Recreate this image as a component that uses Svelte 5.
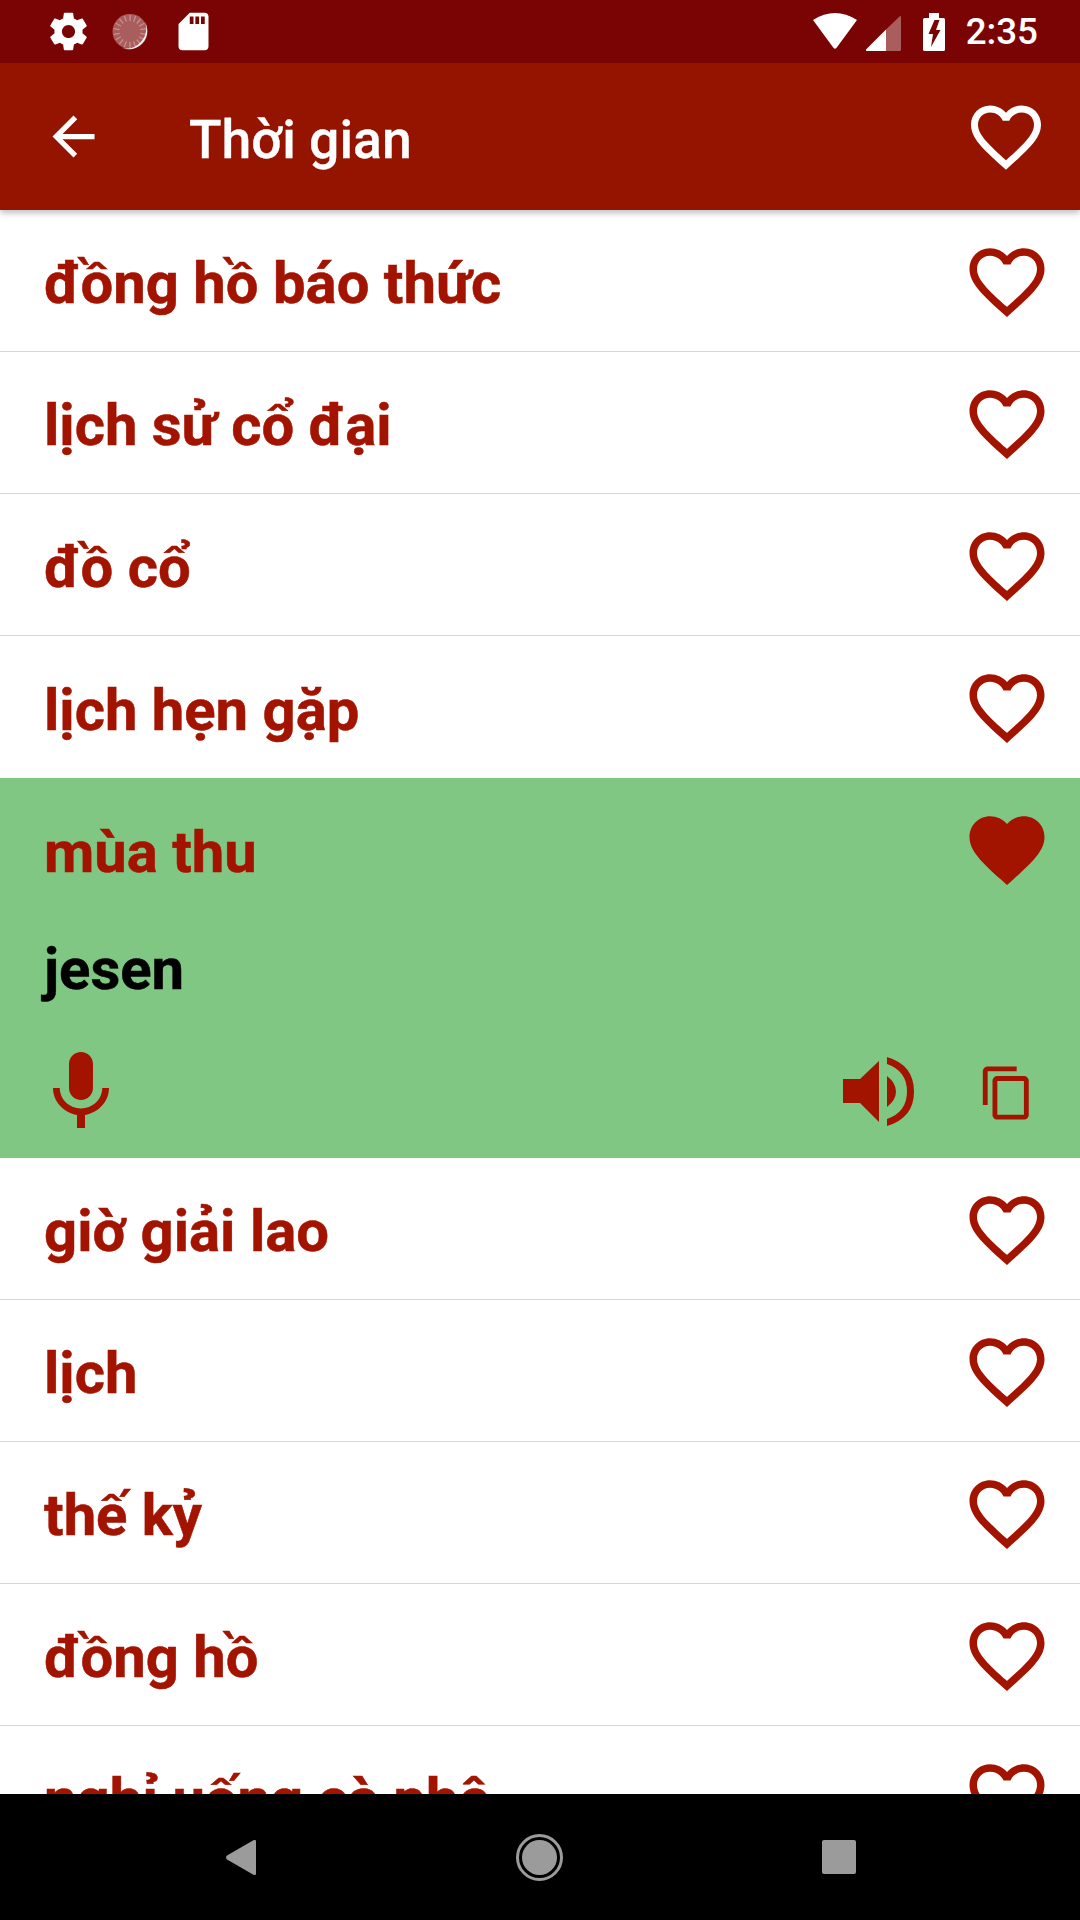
<script lang="ts">
const heart =
  'M16.5 3c-1.74 0-3.41.81-4.5 2.09C10.91 3.81 9.24 3 7.5 3 4.42 3 2 5.42 2 8.5c0 3.78 3.4 6.86 8.55 11.54L12 21.35l1.45-1.32C18.6 15.36 22 12.28 22 8.5 22 5.42 19.58 3 16.5 3zm-4.4 15.55l-.1.1-.1-.1C7.14 14.24 4 11.39 4 8.5 4 6.5 5.5 5 7.5 5c1.54 0 3.04.99 3.57 2.36h1.87C13.46 5.99 14.96 5 16.5 5c2 0 3.5 1.5 3.5 3.5 0 2.89-3.14 5.74-7.9 10.05z';
const heartFull =
  'M12 21.35l-1.45-1.32C5.4 15.36 2 12.28 2 8.5 2 5.42 4.42 3 7.5 3c1.74 0 3.41.81 4.5 2.09C13.09 3.81 14.76 3 16.5 3 19.58 3 22 5.42 22 8.5c0 3.78-3.4 6.86-8.55 11.54L12 21.35z';

const before = ['đồng hồ báo thức', 'lịch sử cổ đại', 'đồ cổ', 'lịch hẹn gặp'];
const after = ['giờ giải lao', 'lịch', 'thế kỷ', 'đồng hồ', 'nghỉ uống cà phê'];
const ticks = Array.from({ length: 18 }, (_, i) => i * 20);
</script>

<div class="screen">
  <div class="status">
    <div class="status-left">
      <svg class="st" viewBox="0 0 24 24"><path fill="#fff" d="M19.43 12.98c.04-.32.07-.64.07-.98s-.03-.66-.07-.98l2.11-1.65c.19-.15.24-.42.12-.64l-2-3.46c-.12-.22-.39-.3-.61-.22l-2.49 1c-.52-.4-1.08-.73-1.69-.98l-.38-2.65C14.46 2.18 14.25 2 14 2h-4c-.25 0-.46.18-.49.42l-.38 2.65c-.61.25-1.17.59-1.69.98l-2.49-1c-.23-.09-.49 0-.61.22l-2 3.46c-.13.22-.07.49.12.64l2.11 1.65c-.04.32-.07.65-.07.98s.03.66.07.98l-2.11 1.65c-.19.15-.24.42-.12.64l2 3.46c.12.22.39.3.61.22l2.49-1c.52.4 1.08.73 1.69.98l.38 2.65c.03.24.24.42.49.42h4c.25 0 .46-.18.49-.42l.38-2.65c.61-.25 1.17-.59 1.69-.98l2.49 1c.23.09.49 0 .61-.22l2-3.46c.12-.22.07-.49-.12-.64l-2.11-1.65zM12 15.5c-1.93 0-3.5-1.57-3.5-3.5s1.57-3.5 3.5-3.5 3.5 1.57 3.5 3.5-1.57 3.5-3.5 3.5z"/></svg>
      <svg class="disc" viewBox="0 0 38 38">
        <circle cx="18" cy="18.500" r="17.500" fill="#fff" fill-opacity="0.36"/>
        {#each ticks as t}
          <rect x="17.400" y="2" width="1.300" height="6" fill="#fff" fill-opacity="0.32" transform="rotate({t} 18 18.500)"/>
        {/each}
        <path fill="#fff" fill-opacity="0.9" d="M33 9A18.500 18.500 0 0 1 10 35A20 20 0 0 0 33 9Z"/>
      </svg>
      <svg class="st" viewBox="0 0 24 24"><path fill="#fff" d="M18 2h-8L4.020 8 4 20c0 1.100.9 2 2 2h12c1.100 0 2-.9 2-2V4c0-1.100-.9-2-2-2zm-6 6h-2V4h2v4zm3 0h-2V4h2v4zm3 0h-2V4h2v4z"/></svg>
    </div>
    <div class="status-right">
      <svg class="wifi" viewBox="0 0 44 37"><path fill="#fff" d="M0 7Q22-7 44 7L23.400 35Q22 36.600 20.600 35Z"/></svg>
      <svg class="cell" viewBox="0 0 35 35">
        <path fill="#fff" d="M0 33.500 20 13.500V35H1.200Q-.6 35 0 33.500Z"/>
        <path fill="#fff" fill-opacity="0.36" d="M20 13.500 33.600.4Q35-.6 35 1V33.500Q35 35 33.500 35H20Z"/>
      </svg>
      <svg class="batt" viewBox="0 0 22 38"><path fill="#fff" fill-rule="evenodd" d="M6 0H16V5H20.500Q22 5 22 6.500V36.500Q22 38 20.500 38H1.500Q0 38 0 36.500V6.500Q0 5 1.500 5H6ZM11.500 7 5.500 21H10L8 34 17.500 17H13L16.500 7Z"/></svg>
      <span class="time">2:35</span>
    </div>
  </div>

  <header class="appbar">
    <svg class="back" viewBox="0 0 24 24"><path fill="#fff" d="M20 11H7.830l5.590-5.590L12 4l-8 8 8 8 1.410-1.410L7.830 13H20v-2z"/></svg>
    <h1 class="title">Thời gian</h1>
    <svg class="bar-heart" viewBox="0 0 24 24"><path fill="#fff" d={heart}/></svg>
  </header>

  <main class="list">
    {#each before as word}
      <div class="row">
        <span class="word">{word}</span>
        <svg class="heart" viewBox="0 0 24 24"><path d={heart}/></svg>
      </div>
    {/each}

    <div class="open">
      <div class="open-head">
        <span class="word">mùa thu</span>
        <svg class="heart" viewBox="0 0 24 24"><path d={heartFull}/></svg>
      </div>
      <div class="translation">jesen</div>
      <div class="actions">
        <svg class="mic" viewBox="0 0 24 24"><path d="M12 14c1.660 0 2.990-1.340 2.990-3L15 5c0-1.660-1.340-3-3-3S9 3.340 9 5v6c0 1.660 1.340 3 3 3zm5.300-3c0 3-2.540 5.100-5.300 5.100S6.700 14 6.700 11H5c0 3.410 2.720 6.230 6 6.720V21h2v-3.280c3.280-.48 6-3.300 6-6.720h-1.700z"/></svg>
        <svg class="speaker" viewBox="0 0 71 69"><path d="M0 22H17L36 4V65L17 46H0ZM44 19Q53 26 53 34.500Q53 43 44 50ZM44 0Q71 8 71 34.500Q71 61 44 69V62Q64 55 64 34.500Q64 14 44 7Z"/></svg>
        <svg class="copy" viewBox="0 0 24 24"><path d="M16 1H4c-1.100 0-2 .9-2 2v14h2V3h12V1zm3 4H8c-1.100 0-2 .9-2 2v14c0 1.100.9 2 2 2h11c1.100 0 2-.9 2-2V7c0-1.100-.9-2-2-2zm0 16H8V7h11v14z"/></svg>
      </div>
    </div>

    {#each after as word}
      <div class="row">
        <span class="word">{word}</span>
        <svg class="heart" viewBox="0 0 24 24"><path d={heart}/></svg>
      </div>
    {/each}
  </main>

  <nav class="navbar">
    <svg class="nav-back" viewBox="0 0 30 35"><path d="M27 .6Q30-1.500 30 2V33Q30 36.500 27 34.400L1 19.500Q-1 17.500 1 15.500Z"/></svg>
    <span class="nav-home"><span class="nav-dot"></span></span>
    <span class="nav-square"></span>
  </nav>
</div>

<style>
  :global(body) {
    margin: 0;
  }

  .screen {
    width: 1080px;
    height: 1920px;
    display: flex;
    flex-direction: column;
    background: #fff;
    font-family: Roboto, sans-serif;
    overflow: hidden;
  }

  .status {
    height: 63px;
    flex: none;
    display: flex;
    align-items: center;
    justify-content: space-between;
    padding: 0 42px 0 46px;
    background: #790403;
    position: relative;
    z-index: 2;
  }

  .status-left {
    display: flex;
    align-items: center;
    gap: 21px;
  }

  .st {
    width: 45px;
    height: 45px;
  }

  .disc {
    width: 38px;
    height: 38px;
  }

  .status-right {
    display: flex;
    align-items: center;
  }

  .wifi {
    width: 44px;
    height: 37px;
    margin-right: 9px;
  }

  .cell {
    width: 35px;
    height: 35px;
    margin: 3px 22px 0 0;
  }

  .batt {
    width: 22px;
    height: 38px;
    margin-right: 21px;
  }

  .time {
    color: #fff;
    font-size: 36.750px;
    font-weight: 500;
  }

  .appbar {
    height: 147px;
    flex: none;
    display: flex;
    align-items: center;
    background: #941400;
    box-shadow: 0 3px 6px rgba(0, 0, 0, 0.25);
    position: relative;
    z-index: 1;
  }

  .back {
    width: 63px;
    height: 63px;
    margin-left: 42px;
  }

  .title {
    flex: 1;
    margin: 5px 0 0 84px;
    color: #fff;
    font-size: 53.500px;
    font-weight: 500;
    -webkit-text-stroke: 0.3px #fff;
  }

  .bar-heart {
    width: 84px;
    height: 84px;
    margin-right: 32px;
  }

  .list {
    flex: 1;
    min-height: 0;
    overflow: hidden;
  }

  .row,
  .open-head {
    height: 142px;
    box-sizing: border-box;
    display: flex;
    flex: none;
    align-items: center;
    justify-content: space-between;
    padding: 2px 28px 0 44px;
  }

  .row {
    border-bottom: 1px solid #d6d6d6;
  }

  .row:has(+ .open) {
    border-bottom: 0;
  }

  .word {
    margin-top: 3px;
    color: #a31400;
    font-size: 58px;
    font-weight: 700;
    -webkit-text-stroke: 0.5px #a31400;
  }

  .heart {
    width: 90px;
    height: 90px;
    fill: #a31400;
  }

  .open {
    height: 380px;
    background: #81c784;
    display: flex;
    flex-direction: column;
  }

  .translation {
    height: 124px;
    padding: 0 44px;
    color: #000;
    font-size: 58px;
    font-weight: 700;
    line-height: 99px;
    -webkit-text-stroke: 0.5px #000;
  }

  .actions {
    display: flex;
    align-items: center;
    padding: 0 44px 0 33px;
  }

  .actions svg {
    fill: #a31400;
  }

  .mic {
    width: 96px;
    height: 96px;
    margin-right: auto;
  }

  .speaker {
    width: 71px;
    height: 69px;
    margin: 0 64px 2px 0;
  }

  .copy {
    width: 58px;
    height: 58px;
    margin-top: 2px;
  }

  .navbar {
    height: 126px;
    flex: none;
    display: grid;
    grid-template-columns: 1fr 1fr 1fr;
    align-items: center;
    justify-items: center;
    background: #000;
    padding: 0 91px;
  }

  .nav-back {
    width: 30px;
    height: 35px;
    fill: #9b9b9b;
  }

  .nav-home {
    width: 47px;
    height: 47px;
    box-sizing: border-box;
    display: flex;
    align-items: center;
    justify-content: center;
    border: 3px solid #9b9b9b;
    border-radius: 50%;
  }

  .nav-dot {
    width: 35px;
    height: 35px;
    border-radius: 50%;
    background: #9b9b9b;
  }

  .nav-square {
    width: 34px;
    height: 34px;
    border-radius: 2px;
    background: #9b9b9b;
  }
</style>
